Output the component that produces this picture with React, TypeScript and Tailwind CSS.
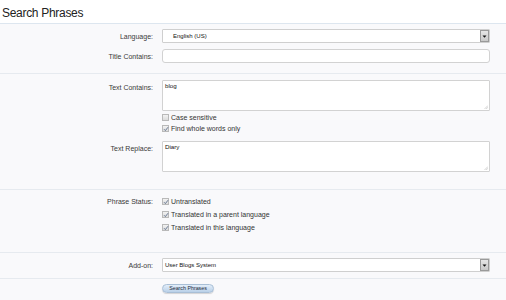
import React from "react";

const font = "font-['Liberation_Sans',Arial,sans-serif]";

function Check({ checked }: { checked: boolean }) {
  return (
    <span className="relative w-[7px] h-[7px] border border-[#b9b9b9] bg-gradient-to-b from-[#f2f2f2] to-[#dcdcdc] flex items-center justify-center shrink-0">
      {checked && (
        <svg width="6" height="6" viewBox="0 0 6 6" className="absolute left-[0px] top-[0px]">
          <path d="M1 3.2 L2.4 4.6 L5 1.2" stroke="#5f6f8c" strokeWidth="0.9" fill="none" />
        </svg>
      )}
    </span>
  );
}

function CheckRow({ label, checked, h }: { label: string; checked: boolean; h: string }) {
  return (
    <div className={`flex items-center ${h} gap-[2px]`}>
      <Check checked={checked} />
      <span className="text-[7px] leading-[9px] text-[#333]">{label}</span>
    </div>
  );
}

function Label({ children, extra = "" }: { children: React.ReactNode; extra?: string }) {
  return (
    <div className={`w-[153px] shrink-0 text-right text-[7px] leading-[11px] text-[#3a3a3a] ${extra}`}>
      {children}
    </div>
  );
}

function Select({ text, pl }: { text: string; pl: string }) {
  return (
    <div className={`relative w-[328px] h-[14px] border border-[#cfcfcf] bg-white rounded-[1px] flex items-center ${pl}`}>
      <span className="text-[6px] leading-[8px] text-[#111]">{text}</span>
      <div className="absolute right-[0px] top-[0px] w-[9px] h-[12px] border border-[#9a9a9a] bg-gradient-to-b from-[#e6e6e6] to-[#c9c9c9] flex items-center justify-center">
        <svg width="5" height="3" viewBox="0 0 5 3">
          <path d="M0.5 0.5 L4.5 0.5 L2.5 2.8 Z" fill="#111" />
        </svg>
      </div>
    </div>
  );
}

function TextArea({ text }: { text: string }) {
  return (
    <div className="relative w-[328px] h-[31px] border border-[#d2d2d2] bg-white rounded-[1px] pl-[2px] pt-[1px] leading-[8px]">
      <div className="text-[6.2px] leading-[8px] text-[#111]">{text}</div>
      <svg width="4" height="4" viewBox="0 0 4 4" className="absolute right-[1px] bottom-[1px]">
        <path d="M4 0.5 L0.5 4 M4 2.2 L2.2 4" stroke="#b5b5b5" strokeWidth="0.6" />
      </svg>
    </div>
  );
}

export default function App() {
  return (
    <div className={`w-[506px] h-[300px] overflow-hidden bg-[#f9f9fb] ${font}`}>
      <div className="h-[24px] bg-white border-b border-[#dde6ef] pl-[2px] pt-[3px]">
        <div className="text-[12px] leading-[20px] tracking-[-0.3px] text-[#222]">Search Phrases</div>
      </div>

      {/* Section 1 */}
      <div className="pt-[5px] pb-[10px] border-b border-[#e6eaef] flex flex-col gap-[6px]">
        <div className="flex items-center">
          <Label>Language:</Label>
          <div className="ml-[9px]">
            <Select text="English (US)" pl="pl-[10px]" />
          </div>
        </div>
        <div className="flex items-center">
          <Label>Title Contains:</Label>
          <div className="ml-[9px] w-[328px] h-[14px] border border-[#d2d2d2] bg-white rounded-[3px]" />
        </div>
      </div>

      {/* Section 2 */}
      <div className="pt-[6px] pb-[17px] border-b border-[#e6eaef]">
        <div className="flex items-start">
          <Label extra="pt-[1.5px]">Text Contains:</Label>
          <div className="ml-[9px] flex flex-col">
            <TextArea text="blog" />
            <div className="mt-[1px]">
              <CheckRow label="Case sensitive" checked={false} h="h-[11px]" />
              <CheckRow label="Find whole words only" checked={true} h="h-[11px]" />
            </div>
          </div>
        </div>
        <div className="flex items-start mt-[7px]">
          <Label extra="pt-[2px]">Text Replace:</Label>
          <div className="ml-[9px]">
            <TextArea text="Diary" />
          </div>
        </div>
      </div>

      {/* Section 3 */}
      <div className="pt-[5px] pb-[18px] border-b border-[#e6eaef]">
        <div className="flex items-start">
          <Label extra="pt-[1px]">Phrase Status:</Label>
          <div className="ml-[9px] flex flex-col">
            <CheckRow label="Untranslated" checked={true} h="h-[13px]" />
            <CheckRow label="Translated in a parent language" checked={true} h="h-[13px]" />
            <CheckRow label="Translated in this language" checked={true} h="h-[13px]" />
          </div>
        </div>
      </div>

      {/* Section 4 */}
      <div className="pt-[5px] pb-[6px] border-b border-[#e6eaef]">
        <div className="flex items-center">
          <Label>Add-on:</Label>
          <div className="ml-[9px]">
            <Select text="User Blogs System" pl="pl-[2px]" />
          </div>
        </div>
      </div>

      <div className="pl-[162px] pt-[5px]">
        <div className="w-[52px] h-[9px] rounded-full border border-[#a9bfd6] bg-gradient-to-b from-[#e3eef9] to-[#b9d0e8] shadow-[0_1px_1px_rgba(0,0,0,0.15)] flex items-center justify-center">
          <span className="text-[5.3px] leading-[7px] text-[#1d2a3a]">Search Phrases</span>
        </div>
      </div>
    </div>
  );
}
